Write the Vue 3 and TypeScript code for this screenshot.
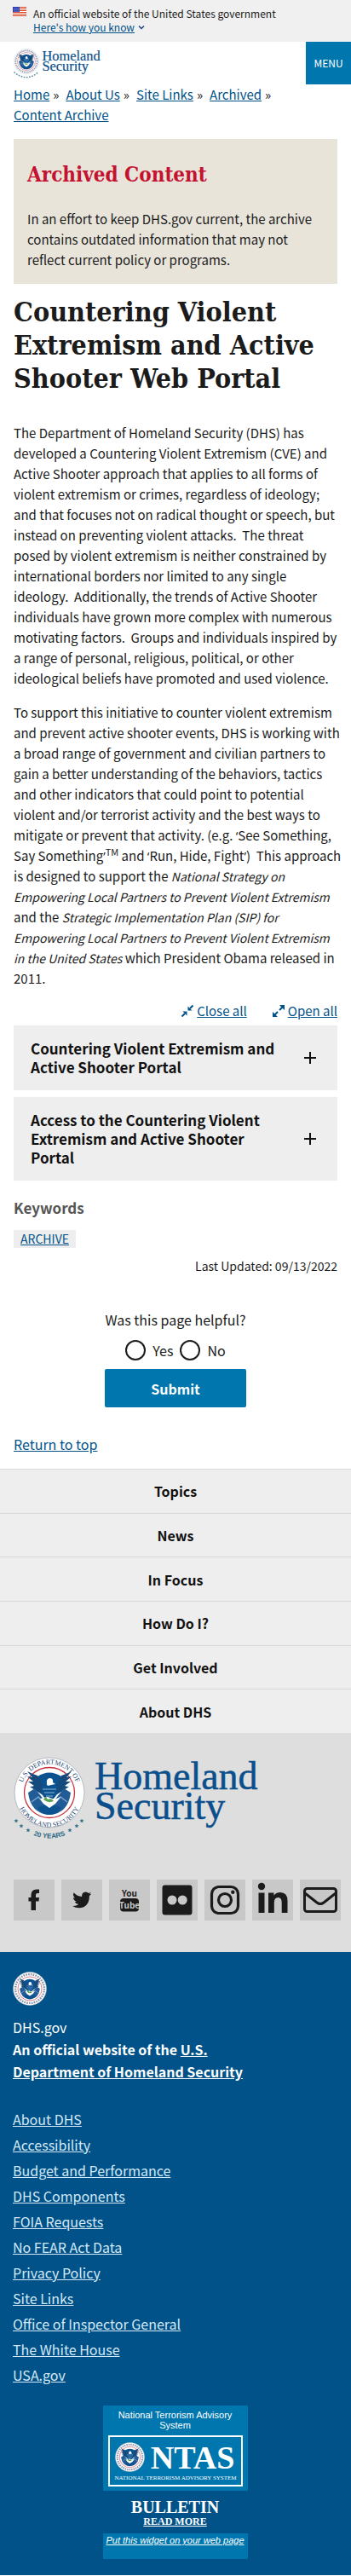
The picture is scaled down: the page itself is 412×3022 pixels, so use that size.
<script setup lang="ts">
import { ref } from 'vue'

const crumbs: string[] = ['Home', 'About Us', 'Site Links', 'Archived', 'Content Archive']
const panels: string[] = [
  'Countering Violent Extremism and Active Shooter Portal',
  'Access to the Countering Violent Extremism and Active Shooter Portal',
]
const navItems: string[] = ['Topics', 'News', 'In Focus', 'How Do I?', 'Get Involved', 'About DHS']
const footerLinks: string[] = [
  'About DHS',
  'Accessibility',
  'Budget and Performance',
  'DHS Components',
  'FOIA Requests',
  'No FEAR Act Data',
  'Privacy Policy',
  'Site Links',
  'Office of Inspector General',
  'The White House',
  'USA.gov',
]
const stars: number[][] = [[3, 75], [9, 81], [17, 86], [66, 86], [74, 81], [80, 75]]
const helpful = ref<string>('')
</script>

<template>
  <svg class="defs" aria-hidden="true">
    <defs>
      <symbol id="eagle" viewBox="0 0 84 84">
        <circle cx="42" cy="42" r="41" fill="#fff" stroke="#b4bac2" stroke-width="1" />
        <circle cx="42" cy="42" r="29.5" fill="#fff" stroke="#c8313e" stroke-width="1.3" />
        <path d="M28 23 Q42 14 56 23 L54 34 H30 Z" fill="#0a5290" />
        <path d="M16 17 Q22 20 28 22 L33 32 L36 46 L19 35 Q22 35 24 34 L17 29 L23 29 L16 23 L22 24 Z" fill="#174a7c" />
        <path d="M68 17 Q62 20 56 22 L51 32 L48 46 L65 35 Q62 35 60 34 L67 29 L61 29 L68 23 L62 24 Z" fill="#174a7c" />
        <path d="M17 42 L25 37 L36 51 L41 68 Q20 66 17 42 Z" fill="#215c96" />
        <path d="M67 42 L59 37 L48 51 L43 68 Q64 66 67 42 Z" fill="#215c96" />
        <path d="M28 60 Q42 52 56 60 Q50 68 42 68 Q34 68 28 60 Z" fill="#0a5290" />
        <path d="M21 53 L29 47 L35 54 M63 53 L55 47 L49 54" fill="none" stroke="#7da6cc" stroke-width="1.5" />
        <path d="M39 31 Q38 26 42 25 Q47 25 46 30 L49 32 L44 33 Q38 35 39 31 Z" fill="#fff" />
        <path d="M33 34 H51 V43 Q48 50 42 52 Q36 50 33 43 Z" fill="#0a5290" />
        <path d="M34 38 H50 M36 42 H48 M38 46 H46" stroke="#8fb4d6" stroke-width="1" />
        <path d="M31 49 L40 47 L48 50 L55 47 L49 55 L42 60 L35 55 Z" fill="#fff" />
        <path d="M35 50 Q38 45 40 50 Q45 48 47 52 Q40 55 35 50 Z" fill="#59a352" />
      </symbol>
      <symbol id="seal-mini" viewBox="0 0 84 84">
        <use href="#eagle" width="84" height="84" />
        <circle cx="42" cy="42" r="35.5" fill="none" stroke="#8a94ad" stroke-width="5" stroke-dasharray="3.5 2.5" />
      </symbol>
      <path id="seal-top" d="M10 52 A33.5 33.5 0 1 1 74 52" fill="none" />
      <path id="seal-bottom" d="M3.5 44 A38.5 38.5 0 0 0 80.5 44" fill="none" />
      <path id="years-arc" d="M13 87 Q42 104 71 87" fill="none" />
    </defs>
  </svg>

  <div class="page" id="top">
    <header>
      <div class="gov-banner">
        <svg class="flag" viewBox="0 0 16 11" aria-hidden="true">
          <rect width="16" height="11" fill="#fff" />
          <path d="M0 .5H16M0 2.5H16M0 4.5H16M0 6.5H16M0 8.5H16M0 10.5H16" stroke="#db3e1f" />
          <rect width="8" height="6" fill="#1e33b1" />
          <path d="M1 1.5H8M1 3.5H8M1 5.2H8" stroke="#fff" stroke-width=".7" stroke-dasharray=".8 1" />
        </svg>
        <div>
          <p>An official website of the United States government</p>
          <button type="button" class="know">
            <span>Here's how you know</span>
            <svg viewBox="0 0 8 6" aria-hidden="true"><path d="M1 1.5 L4 4.5 L7 1.5" fill="none" stroke="#1a4480" stroke-width="1.5" /></svg>
          </button>
        </div>
      </div>
      <div class="masthead">
        <a href="#" aria-label="Homeland Security home">
          <svg class="brand-small" viewBox="0 0 292 98">
            <use href="#seal-mini" width="84" height="84" />
            <text class="brand-text" x="94" y="38">Homeland</text>
            <text class="brand-text" x="94" y="74">Security</text>
            <path d="M1 77 Q42 112 82 77" fill="none" stroke="#5f8da3" stroke-width="4" stroke-dasharray="5 4" />
          </svg>
        </a>
        <button type="button" class="menu">MENU</button>
      </div>
    </header>

    <main>
      <nav class="crumbs" aria-label="Breadcrumb">
        <span v-for="(c, i) in crumbs" :key="c" class="crumb"><a href="#">{{ c }}</a><span v-if="i < crumbs.length - 1" class="sep">»</span></span>
      </nav>

      <section class="archived">
        <h2>Archived Content</h2>
        <p>In an effort to keep DHS.gov current, the archive contains outdated information that may not reflect current policy or programs.</p>
      </section>

      <h1>Countering Violent Extremism and Active Shooter Web Portal</h1>

      <div class="prose">
        <p>The Department of Homeland Security (DHS) has developed a Countering Violent Extremism (CVE) and Active Shooter approach that applies to all forms of violent extremism or crimes, regardless of ideology; and that focuses not on radical thought or speech, but instead on preventing violent attacks.&nbsp; The threat posed by violent extremism is neither constrained by international borders nor limited to any single ideology.&nbsp; Additionally, the trends of Active Shooter individuals have grown more complex with numerous motivating factors.&nbsp; Groups and individuals inspired by a range of personal, religious, political, or other ideological beliefs have promoted and used violence.</p>
        <p>To support this initiative to counter violent extremism and prevent active shooter events, DHS is working with a broad range of government and civilian partners to gain a better understanding of the behaviors, tactics and other indicators that could point to potential violent and/or terrorist activity and the best ways to mitigate or prevent that activity. (e.g. <span class="quote">‘</span>See Something, Say Something<span class="quote">’</span><sup>TM</sup> and <span class="quote">‘</span>Run, Hide, Fight<span class="quote">’</span>)&nbsp; This approach is designed to support the <em>National Strategy on Empowering Local Partners to Prevent Violent Extremism</em> and the <em>Strategic Implementation Plan (SIP) for Empowering Local Partners to Prevent Violent Extremism in the United States</em> which President Obama released in 2011.</p>
      </div>

      <div class="toggles">
        <button type="button">
          <svg viewBox="0 0 14 14" aria-hidden="true"><path d="M13.5 .5 L10 4 M.5 13.5 L4 10" stroke="#005288" stroke-width="2" /><path d="M7.5 1.5 V6.5 H12.5 Z M6.5 12.5 V7.5 H1.5 Z" fill="#005288" /></svg>
          <span>Close all</span>
        </button>
        <button type="button">
          <svg viewBox="0 0 14 14" aria-hidden="true"><path d="M12 2 L8 6 M2 12 L6 8" stroke="#005288" stroke-width="2" /><path d="M8 0 H14 V6 Z M0 8 V14 H6 Z" fill="#005288" /></svg>
          <span>Open all</span>
        </button>
      </div>

      <h3 v-for="p in panels" :key="p" class="panel">
        <button type="button" aria-expanded="false">
          <span>{{ p }}</span>
          <svg viewBox="0 0 14 14" aria-hidden="true"><path d="M7 0V14M0 7H14" stroke="#111" stroke-width="2" /></svg>
        </button>
      </h3>

      <h2 class="keywords">Keywords</h2>
      <a class="tag" href="#">ARCHIVE</a>
      <p class="updated">Last Updated: 09/13/2022</p>

      <form class="helpful" @submit.prevent>
        <fieldset>
          <legend>Was this page helpful?</legend>
          <div class="choices">
            <label><input v-model="helpful" type="radio" name="helpful" value="yes" />Yes</label>
            <label><input v-model="helpful" type="radio" name="helpful" value="no" />No</label>
          </div>
        </fieldset>
        <button type="submit">Submit</button>
      </form>

      <a class="return" href="#top">Return to top</a>
    </main>

    <footer>
      <nav class="sections" aria-label="Footer">
        <a v-for="n in navItems" :key="n" href="#">{{ n }}</a>
      </nav>

      <div class="contact">
        <svg class="brand-large" viewBox="0 0 292 98" role="img" aria-label="Homeland Security">
          <use href="#eagle" width="84" height="84" />
          <text class="seal-text"><textPath href="#seal-top" startOffset="50%" text-anchor="middle">U.S. DEPARTMENT OF</textPath></text>
          <text class="seal-text"><textPath href="#seal-bottom" startOffset="50%" text-anchor="middle">HOMELAND SECURITY</textPath></text>
          <text class="brand-text" x="95" y="38">Homeland</text>
          <text class="brand-text" x="95" y="73">Security</text>
          <path
            v-for="s in stars"
            :key="s[0]"
            :transform="`translate(${s[0]} ${s[1]})`"
            d="M0 -2.6 L.7 -.8 L2.6 -.7 L1.1 .5 L1.6 2.3 L0 1.3 L-1.6 2.3 L-1.1 .5 L-2.6 -.7 L-.7 -.8 Z"
            fill="#2b6a83"
          />
          <text class="years"><textPath href="#years-arc" startOffset="50%" text-anchor="middle">20 YEARS</textPath></text>
        </svg>
        <div class="social">
          <a href="#" aria-label="Facebook">
            <svg viewBox="0 0 48 48"><path d="M20.5 36 V25.5 H17.5 V21 H20.5 V18 Q20.5 11.5 27 11.5 H30 V16 H28 Q26 16 26 18.2 V21 H30 L29.5 25.5 H26 V36 Z" /></svg>
          </a>
          <a href="#" aria-label="Twitter">
            <svg viewBox="0 0 48 48"><path d="M35 16.4 Q34 17 33 17.1 Q34.3 16.2 34.7 14.8 Q33.4 15.6 32 15.9 Q30.5 14.3 28.5 14.4 Q24.2 14.8 24.1 19 V20 Q18.5 19.7 14.7 15.3 Q12.8 18.8 16 21.6 Q15 21.5 14 21 Q14.2 24.6 17.8 25.8 Q16.8 26 15.8 25.9 Q17 28.8 20.2 29 Q17.1 31.5 13 31 Q19.5 35 26.3 32.2 Q33.2 28.7 32.9 19 Q34.3 18 35 16.4 Z" /></svg>
          </a>
          <a href="#" aria-label="YouTube">
            <svg viewBox="0 0 48 48"><text class="yt" x="24" y="20" text-anchor="middle">You</text><rect x="13" y="22" width="22" height="15.5" rx="4" /><text class="yt yt-light" x="24" y="34" text-anchor="middle">Tube</text></svg>
          </a>
          <a href="#" aria-label="Flickr">
            <svg viewBox="0 0 48 48"><path fill-rule="evenodd" d="M9.5 6.5 H38.5 Q41.5 6.5 41.5 9.5 V38.5 Q41.5 41.5 38.5 41.5 H9.5 Q6.5 41.5 6.5 38.5 V9.5 Q6.5 6.5 9.5 6.5 Z M12.5 24 a5.5 5.5 0 1 0 11 0 a5.5 5.5 0 1 0 -11 0 Z M24.7 24 a5.5 5.5 0 1 0 11 0 a5.5 5.5 0 1 0 -11 0 Z" /></svg>
          </a>
          <a href="#" aria-label="Instagram">
            <svg viewBox="0 0 48 48"><rect x="8.5" y="8.5" width="31" height="31" rx="8.5" fill="none" stroke="#1b1b1b" stroke-width="3.2" /><circle cx="24" cy="24" r="7.5" fill="none" stroke="#1b1b1b" stroke-width="3.2" /><circle cx="33.3" cy="14.7" r="2.2" /></svg>
          </a>
          <a href="#" aria-label="LinkedIn">
            <svg viewBox="0 0 48 48"><circle cx="11" cy="8" r="4.2" /><path d="M7.5 15.5 H14.5 V39 H7.5 Z M19 15.5 H25.5 V18.8 Q27.5 15 33 15 Q41.5 15 41.5 25 V39 H34.7 V27 Q34.7 21 30.5 21 Q25.8 21 25.8 27 V39 H19 Z" /></svg>
          </a>
          <a href="#" aria-label="Email">
            <svg viewBox="0 0 48 48"><rect x="5.5" y="10.5" width="37" height="27" rx="3" fill="none" stroke="#1b1b1b" stroke-width="3" /><path d="M6 16 L20 27 Q24 30 28 27 L42 16" fill="none" stroke="#1b1b1b" stroke-width="3" /></svg>
          </a>
        </div>
      </div>

      <div class="identifier">
        <svg class="seal-small" viewBox="0 0 84 84" role="img" aria-label="DHS seal"><use href="#seal-mini" /></svg>
        <p class="domain">DHS.gov</p>
        <p class="owner">An official website of the <a href="#">U.S. Department of Homeland Security</a></p>
        <ul>
          <li v-for="l in footerLinks" :key="l"><a href="#">{{ l }}</a></li>
        </ul>
        <aside class="ntas">
          <div class="ntas-head">
            <p>National Terrorism Advisory System</p>
            <svg viewBox="0 0 158 60" role="img" aria-label="NTAS">
              <rect x="1" y="1" width="156" height="58" fill="none" stroke="#fff" stroke-width="2" />
              <use href="#seal-mini" x="14" y="8" width="35" height="35" transform="translate(-6 0)" />
              <text class="ntas-name" x="99" y="39" text-anchor="middle">NTAS</text>
              <text class="ntas-full" x="79" y="52" text-anchor="middle">NATIONAL TERRORISM ADVISORY SYSTEM</text>
            </svg>
          </div>
          <div class="ntas-body">
            <strong>BULLETIN</strong>
            <a href="#">READ MORE</a>
          </div>
          <div class="ntas-foot"><a href="#">Put this widget on your web page</a></div>
        </aside>
      </div>
    </footer>
  </div>
</template>

<style>
body {
  margin: 0;
  background: #fff;
}
</style>

<style scoped>
.defs {
  position: absolute;
  width: 0;
  height: 0;
}
.page {
  font-family: "Noto Sans CJK SC", "Open Sans", sans-serif;
  font-size: 15px;
  line-height: 24px;
  color: #1b1b1b;
}
p, h1, h2, h3, ul, fieldset {
  margin: 0;
  padding: 0;
  border: 0;
}
button {
  font: inherit;
  color: inherit;
  border: 0;
  padding: 0;
  background: none;
  cursor: pointer;
}
a {
  color: #005288;
}
.quote {
  font-family: "Open Sans", sans-serif;
  line-height: 0;
}
.seal-text {
  font: 8px "Liberation Serif", serif;
  fill: #23456f;
}
.brand-text {
  font: 46px "Liberation Serif", serif;
  fill: #0a4f8c;
  stroke: #0a4f8c;
  stroke-width: .5px;
}
.years {
  font: bold 8px "Liberation Sans", sans-serif;
  fill: #2b6a83;
}
.gov-banner {
  display: flex;
  gap: 8px;
  padding: 8px 16px 9px 15px;
  background: #f0f0f0;
  font-size: 12px;
  line-height: 16px;
}
.flag {
  width: 16px;
  height: 11px;
  flex: none;
}
.know {
  display: flex;
  align-items: center;
  gap: 4px;
  color: #005288;
}
.know span {
  text-decoration: underline;
}
.know svg {
  width: 8px;
  height: 6px;
}
.masthead {
  display: flex;
  justify-content: space-between;
  padding-left: 16px;
}
.brand-small {
  display: block;
  width: 104px;
  height: 35px;
  margin-top: 8px;
}
.menu {
  width: 53px;
  height: 50px;
  background: #0076ae;
  color: #fff;
  font-size: 12px;
}
main {
  padding: 0 16px;
}
.crumb {
  display: inline-block;
  margin-right: 8px;
}
.sep {
  margin-left: 4px;
}
.archived {
  margin-top: 16px;
  padding: 24px 16px 16px;
  background: #e8e4da;
}
.archived h2 {
  font: bold 24px/36px "DejaVu Serif Condensed", "DejaVu Serif", serif;
  color: #c41230;
  margin-bottom: 22px;
}
h1 {
  margin-top: 14px;
  font: bold 32px/39px "DejaVu Serif Condensed", "DejaVu Serif", serif;
}
.prose {
  margin-top: 32px;
}
.prose p + p {
  margin-top: 16px;
  margin-right: -6px;
}
.prose em {
  font-size: 14px;
}
sup {
  font-size: 11px;
  line-height: 0;
}
.toggles {
  display: flex;
  justify-content: flex-end;
  gap: 30px;
  margin: 14px 0 5px;
  color: #005288;
}
.toggles button {
  display: flex;
  align-items: center;
  gap: 4px;
}
.toggles span {
  text-decoration: underline;
}
.toggles svg {
  width: 14px;
  height: 14px;
}
.panel {
  margin-bottom: 8px;
}
.panel button {
  display: flex;
  justify-content: space-between;
  align-items: center;
  gap: 24px;
  width: 100%;
  padding: 16px 25px 16px 20px;
  background: #eee;
  color: #111;
  font-size: 17px;
  line-height: 22px;
  font-weight: 700;
  text-align: left;
}
.panel svg {
  width: 14px;
  height: 14px;
  flex: none;
}
.keywords {
  margin-top: 20px;
  font-size: 17px;
  line-height: 24px;
  color: #555;
}
.tag {
  display: table;
  margin-top: 14px;
  padding: 0 8px;
  background: #eee;
  font-size: 14px;
  line-height: 21px;
}
.updated {
  margin-top: 9px;
  font-size: 14px;
  text-align: right;
}
.helpful, .return, .sections, .identifier {
  font-size: 16px;
}
.helpful {
  margin-top: 39px;
  text-align: center;
}
legend {
  width: 100%;
  padding: 0;
}
.choices {
  display: flex;
  justify-content: center;
  gap: 8px;
  margin-top: 12px;
}
.choices label {
  display: flex;
  align-items: center;
  gap: 8px;
}
.choices input {
  appearance: none;
  width: 24px;
  height: 24px;
  margin: 0;
  border: 2px solid #1b1b1b;
  border-radius: 50%;
  background: #fff;
}
.choices input:checked {
  box-shadow: inset 0 0 0 4px #fff;
  background: #0076ae;
}
.helpful button {
  width: 166px;
  height: 45px;
  margin-top: 10px;
  border-radius: 2px;
  background: #0076ae;
  color: #fff;
  font-weight: 700;
}
.return {
  display: block;
  margin: 31px 0 17px;
}
.sections {
  display: flex;
  flex-direction: column;
  min-height: 310px;
}
.sections a {
  display: flex;
  flex: 1;
  align-items: center;
  justify-content: center;
  border-top: 1px solid #d9d9d9;
  background: #eee;
  color: #111;
  font-weight: 700;
  text-decoration: none;
}
.contact {
  padding: 28px 12px 37px 16px;
  background: #dedede;
}
.brand-large {
  display: block;
  width: 292px;
  height: 98px;
  overflow: visible;
}
.social {
  display: flex;
  gap: 8px;
  margin-top: 46px;
}
.social a {
  flex: none;
  width: 48px;
  height: 48px;
  background: #c8c8c8;
}
.social svg {
  display: block;
  fill: #1b1b1b;
}
.yt {
  font: bold 10px "Noto Sans CJK SC", sans-serif;
}
.yt-light {
  fill: #c8c8c8;
}
.identifier {
  padding: 23px 16px 19px 15px;
  background: #005288;
  color: #fff;
}
.identifier a {
  color: inherit;
}
.seal-small {
  display: block;
  width: 40px;
  height: 40px;
}
.domain, .owner {
  line-height: 26px;
}
.domain {
  margin-top: 12px;
}
.owner {
  max-width: 300px;
  font-weight: 700;
}
.identifier ul {
  margin-top: 28px;
  list-style: none;
}
.identifier li {
  line-height: 30px;
  color: #d4e9f7;
}
.ntas {
  width: 170px;
  margin: 21px auto 0;
  text-align: center;
  font: 11px/12px "Liberation Sans", sans-serif;
}
.ntas-head, .ntas-foot {
  background: #0076ae;
}
.ntas-head {
  padding: 5px 6px;
}
.ntas-head svg {
  display: block;
  width: 158px;
  height: 60px;
  margin-top: 6px;
}
.ntas-name {
  font: bold 38px "Liberation Serif", serif;
  fill: #fff;
}
.ntas-full {
  font: 7px "Liberation Serif", serif;
  fill: #fff;
}
.ntas-body {
  display: flex;
  flex-direction: column;
  align-items: center;
  padding: 9px 0 7px;
  font-family: "Liberation Serif", serif;
}
.ntas-body strong {
  font-size: 20px;
  line-height: 20px;
}
.ntas-body a {
  font-size: 12px;
  line-height: 14px;
  font-weight: 700;
}
.ntas-foot {
  padding: 2px 0 16px;
  font-style: italic;
  white-space: nowrap;
}
</style>
